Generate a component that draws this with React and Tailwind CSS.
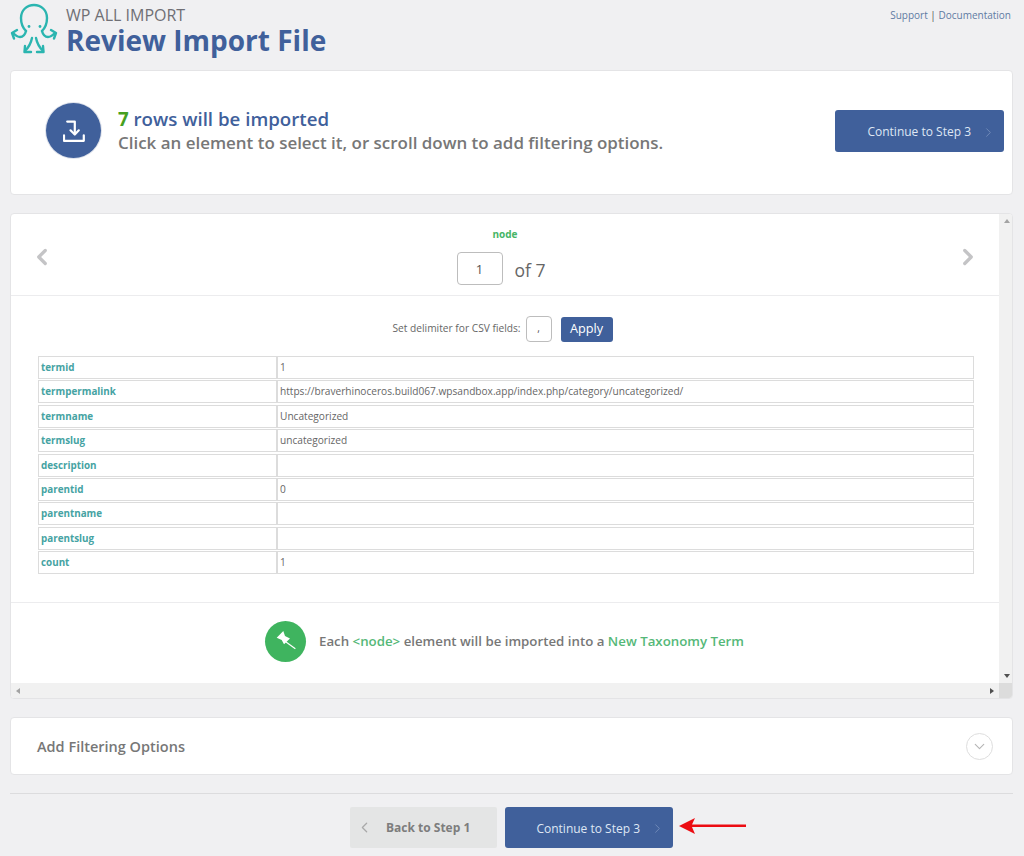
import React from "react";
import { ChevronLeft, ChevronRight, ChevronDown } from "lucide-react";

const rows = [
  ["termid", "1"],
  ["termpermalink", "https://braverhinoceros.build067.wpsandbox.app/index.php/category/uncategorized/"],
  ["termname", "Uncategorized"],
  ["termslug", "uncategorized"],
  ["description", ""],
  ["parentid", "0"],
  ["parentname", ""],
  ["parentslug", ""],
  ["count", "1"],
];

function Octopus() {
  return (
    <svg width="60" height="60" viewBox="0 0 60 60" fill="none" stroke="#2bb5b0" strokeWidth="2.4" strokeLinecap="round" strokeLinejoin="round">
      <path d="M21 31 C17 27 16 22 16 18 C16 10 22 5 29 5 C36 5 42 10 42 18 C42 22 41 27 37 31" />
      <path d="M21 31 C20 35 18 37 15 37 C12 37 10 35 8 33" />
      <path d="M12 30 L7 33 L9 38.5" />
      <path d="M37 31 C38 35 40 37 43 37 C46 37 48 35 50 33" />
      <path d="M46 30 L51 33 L49 38.5" />
      <path d="M27 38 C26 43 24 47 20 51" />
      <path d="M20 46 L19.5 52 L26 52" />
      <path d="M31 38 C32 43 34 47 38 51" />
      <path d="M38 46 L38.5 52 L32 52" />
      <circle cx="24" cy="26.5" r="1.4" fill="#2bb5b0" stroke="none" />
      <circle cx="35" cy="26.5" r="1.4" fill="#2bb5b0" stroke="none" />
    </svg>
  );
}

function ContinueButton({ extra }) {
  return (
    <div className={`${extra} bg-[#40609b] rounded-[3px] flex items-center justify-end pr-[8px] pt-[2px] text-[#dfe7f4] text-[12px]`}>
      <span>Continue to Step 3</span>
      <ChevronRight className="ml-[10px] text-[#6f89b8]" size={15} strokeWidth={1.6} />
    </div>
  );
}

export default function App() {
  return (
    <div className="w-[1024px] h-[856px] overflow-hidden bg-[#f0f0f2] pl-[10px] pr-[11px] text-[#777] font-['Open_Sans',sans-serif]">
      <header className="h-[70px] flex justify-between">
        <div className="flex">
          <div className="-ml-[5px]"><Octopus /></div>
          <div className="ml-[1px]">
            <div className="text-[16px] leading-[18px] pt-[6px] text-[#6f6f75]">WP ALL IMPORT</div>
            <div className="text-[28px] leading-[33px] font-bold text-[#40609b]">Review Import File</div>
          </div>
        </div>
        <div className="text-[10px] leading-[14px] pt-[8px] pr-[2px] text-[#5f7ba3]">
          Support <span className="text-[#555]">|</span> Documentation
        </div>
      </header>

      <section className="h-[125px] bg-white rounded-[4px] border border-[#e4e4e6] flex items-center justify-between pl-[35px] pr-[8px]">
        <div className="flex items-center gap-[17px] mb-[4px]">
          <div className="w-[55px] h-[55px] rounded-full bg-[#40609b] flex items-center justify-center shadow-[0_0_0_1px_#dfe3ec]">
            <svg width="22" height="22" viewBox="0 0 22 22" fill="none" stroke="#fff" strokeWidth="2.2" strokeLinecap="round" strokeLinejoin="round">
              <path d="M1 15.3 V20.8 H20.8 V15.3" />
              <path d="M4.2 1.6 H11.8 V14" />
              <path d="M7.5 10.3 L11.8 14.5 L15.8 10.3" />
            </svg>
          </div>
          <div>
            <div className="text-[18.7px] leading-[24px] font-semibold text-[#40609b]"><span className="text-[#46a020] font-bold">7</span> rows will be imported</div>
            <div className="text-[16.96px] leading-[24px] font-semibold text-[#777]">Click an element to select it, or scroll down to add filtering options.</div>
          </div>
        </div>
        <ContinueButton extra="w-[169px] h-[42px] mb-[3px]" />
      </section>

      <section className="mt-[18px] h-[486px] bg-white rounded-[4px] border border-[#e4e4e6] flex flex-col overflow-hidden">
        <div className="flex flex-1 min-h-0">
          <div className="flex-1 min-w-0 flex flex-col">
            <div className="h-[82px] border-b border-[#ececee] flex items-center justify-between px-[18px]">
              <ChevronLeft className="text-[#c4c4c6] mt-[5px]" size={26} strokeWidth={3} />
              <div className="flex flex-col items-center pt-[2px]">
                <div className="text-[10px] leading-[14px] font-bold text-[#46b566]">node</div>
                <div className="flex items-center mt-[11px] mr-[8px]">
                  <div className="w-[46px] h-[33px] border border-[#bdbdbd] rounded-[4px] flex items-center justify-center pt-[4px] text-[13px] text-[#555]">1</div>
                  <span className="ml-[12px] mt-[4px] text-[17.5px] text-[#666]">of 7</span>
                </div>
              </div>
              <ChevronRight className="text-[#c4c4c6] mt-[5px]" size={26} strokeWidth={3} />
            </div>

            <div className="h-[307px] border-b border-[#ececee] pl-[27px] pr-[25px] pt-[20px]">
              <div className="flex items-center justify-center h-[26px] text-[10.2px] text-[#666] mr-[7px]">
                <span>Set delimiter for CSV fields:</span>
                <div className="ml-[5px] w-[26px] h-[26px] border border-[#bdbdbd] rounded-[4px] flex items-center justify-center text-[#555]">,</div>
                <div className="ml-[9px] w-[52px] h-[25px] bg-[#40609b] rounded-[3px] text-white text-[12.7px] flex items-center justify-center">Apply</div>
              </div>
              <div className="mt-[14px] flex flex-col gap-[1.375px]">
                {rows.map(([k, v]) => (
                  <div key={k} className="h-[23px] border border-[#dcdcdc] flex">
                    <div className="w-[239px] border-r-2 border-[#dcdcdc] pl-[2px] flex items-center font-bold text-[#46a3a3] text-[9.85px]">{k}</div>
                    <div className="flex-1 pl-[2px] flex items-center text-[#666] text-[10.15px]">{v}</div>
                  </div>
                ))}
              </div>
            </div>

            <div className="flex-1 flex items-center justify-center pb-[3px] pr-[1px]">
              <div className="w-[41px] h-[41px] rounded-full bg-[#3fb45f] flex items-center justify-center mr-[13px]">
                <svg width="41" height="41" viewBox="5 5 41 41">
                  <path d="M16.7 21.7 L23.3 15 L25 20 L30 22.5 L24 28.3 L21.7 24 Z" fill="#fff" />
                  <path d="M26 26 L35 32.5" stroke="#fff" strokeWidth="1.2" strokeLinecap="round" />
                </svg>
              </div>
              <div className="text-[13.28px] font-semibold text-[#777]">
                Each <span className="text-[#55b878]">&lt;node&gt;</span> element will be imported into a <span className="text-[#55b878]">New Taxonomy Term</span>
              </div>
            </div>
          </div>
          <div className="w-[13px] bg-[#f1f1f1] flex flex-col items-center justify-between py-[5px] pl-[3px]">
            <div className="w-0 h-0 border-x-[3.5px] border-x-transparent border-b-[4px] border-b-[#a3a3a3]" />
            <div className="w-0 h-0 border-x-[3.5px] border-x-transparent border-t-[4px] border-t-[#505050]" />
          </div>
        </div>
        <div className="h-[15px] flex bg-[#f1f1f1]">
          <div className="flex-1 flex items-center justify-between px-[5px]">
            <div className="w-0 h-0 border-y-[3.5px] border-y-transparent border-r-[4px] border-r-[#a3a3a3]" />
            <div className="w-0 h-0 border-y-[3.5px] border-y-transparent border-l-[4px] border-l-[#505050]" />
          </div>
          <div className="w-[13px] bg-[#dcdcdc]" />
        </div>
      </section>

      <section className="mt-[18px] h-[58px] bg-white rounded-[4px] border border-[#e4e4e6] flex items-center justify-between pl-[26px] pr-[19px]">
        <div className="text-[14.5px] font-semibold text-[#777] pt-[2px]">Add Filtering Options</div>
        <div className="w-[27px] h-[27px] rounded-full border border-[#dedede] flex items-center justify-center">
          <ChevronDown className="text-[#b5b5b5]" size={17} strokeWidth={1.6} />
        </div>
      </section>

      <div className="mt-[18px] border-t border-[#dcdcde] pt-[13px] relative flex justify-center gap-[8px]">
        <div className="w-[147px] h-[41px] bg-[#e4e5e5] rounded-[2px] flex items-center pl-[6px] text-[12px] font-bold text-[#7d7d7d]">
          <ChevronLeft className="text-[#a9a9a9]" size={17} strokeWidth={1.8} />
          <span className="ml-[13px]">Back to Step 1</span>
        </div>
        <ContinueButton extra="w-[168px] h-[41px]" />
        <svg className="absolute left-[669px] top-[24px]" width="69" height="16" viewBox="0 0 69 16">
          <path d="M0 8 L16 0 L13 6.6 H67 V9 H13 L16 16 Z" fill="#ec0c12" />
        </svg>
      </div>
    </div>
  );
}
